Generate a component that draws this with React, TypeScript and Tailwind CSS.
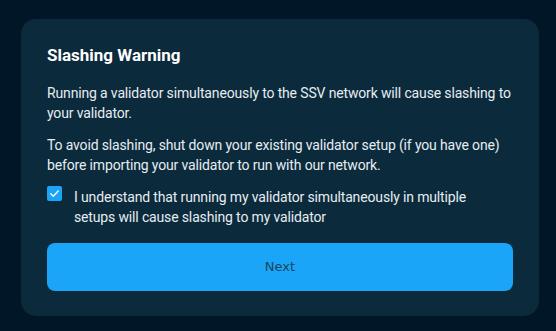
import { useState } from "react";

export default function App() {
  const [checked, setChecked] = useState(true);

  return (
    <div
      className="min-h-[331px] w-full bg-[#011627] pl-[21px] pr-[17px] pt-[19px] pb-[15px]"
      style={{ fontFamily: "Roboto, 'Noto Sans', sans-serif" }}
    >
      <div className="rounded-[15px] bg-[#0b2a3c] px-[26px] pt-6 pb-[25px]">
        <h2 className="text-[17px] font-bold leading-6 text-white">Slashing Warning</h2>

        <p className="mt-4 text-sm leading-5 tracking-[-0.15px] text-[#e6edf1]">
          Running a validator simultaneously to the SSV network will cause slashing to your validator.
        </p>
        <p className="mt-3 text-sm leading-5 tracking-[-0.15px] text-[#e6edf1]">
          To avoid slashing, shut down your existing validator setup (if you have one) before importing your validator to run with our network.
        </p>

        <label className="mt-3 flex cursor-pointer items-start gap-3">
          <button
            type="button"
            onClick={() => setChecked(!checked)}
            className={`mt-[-1px] flex h-[15px] w-[15px] shrink-0 items-center justify-center rounded-[2px] ${
              checked ? "bg-[#1ba5f8]" : "border border-[#5b7a8c]"
            }`}
          >
            {checked && (
              <svg viewBox="0 0 15 15" className="h-[15px] w-[15px]" fill="none">
                <path d="M3.8 7.8 L6.3 10.2 L11.2 4.9" stroke="white" strokeWidth="1.4" strokeLinecap="round" strokeLinejoin="round" />
              </svg>
            )}
          </button>
          <span className="pr-4 text-sm leading-5 tracking-[-0.15px] text-[#e6edf1]">
            I understand that running my validator simultaneously in multiple setups will cause slashing to my validator
          </span>
        </label>

        <button
          type="button"
          className="mt-4 flex h-12 w-full items-center justify-center rounded-lg bg-[#1ba5f8] text-[13px] text-[#17465a]"
          style={{ fontFamily: "'DejaVu Sans', sans-serif" }}
        >
          Next
        </button>
      </div>
    </div>
  );
}
